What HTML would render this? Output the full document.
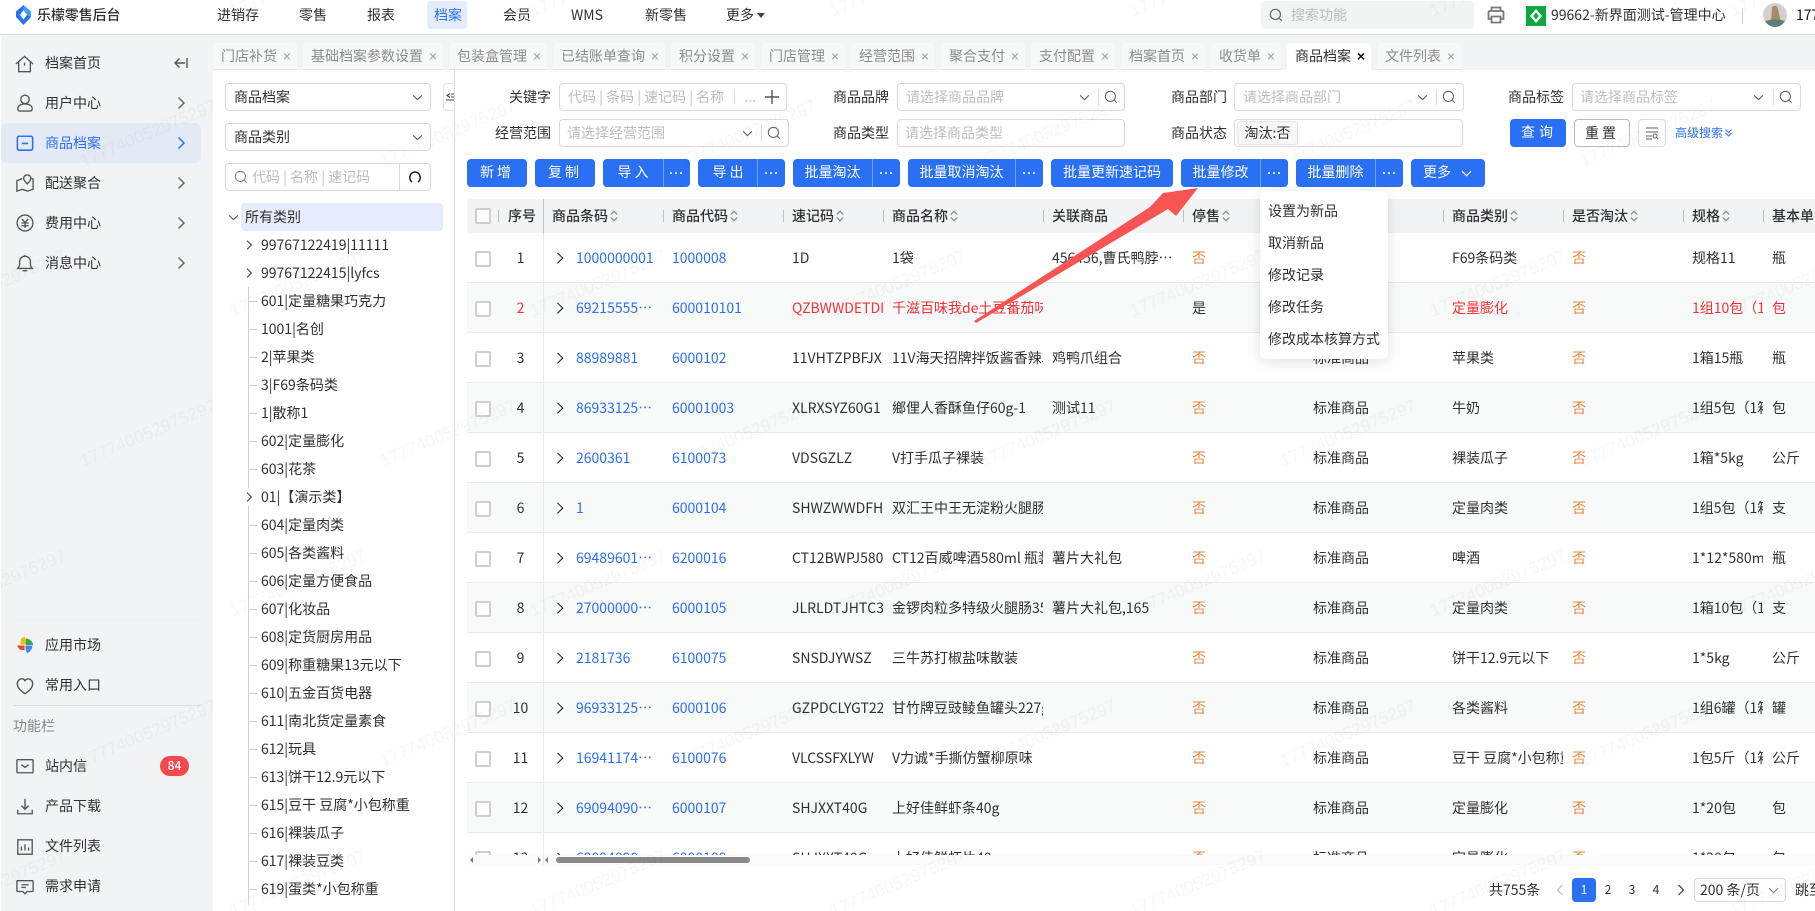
<!DOCTYPE html>
<html lang="zh-CN">
<head>
<meta charset="utf-8">
<title>乐檬零售后台</title>
<style>
*{box-sizing:border-box;margin:0;padding:0}
html,body{width:1815px;height:911px;overflow:hidden;background:#fff}
body{position:relative;font:14px/20px "Noto Sans CJK SC","Liberation Sans",sans-serif;color:#303030}
.a{position:absolute;white-space:nowrap}
svg{position:absolute;overflow:visible;fill:none}
.nav{top:5px;color:#303030}
.side{left:45px;color:#303030}
.sv{left:16px;width:18px;height:18px;stroke:#555;stroke-width:1.5}
.ch{left:176px;width:10px;height:14px;stroke:#666;stroke-width:1.5}
.tab{top:43px;height:27px;background:#f7f8f8;border-radius:4px 4px 0 0;color:#8c8c8c;line-height:26px;padding-left:8px;border-bottom:1px solid #e4e4e4}
.tab i{position:absolute;right:6px;top:0;font:14px/26px "Liberation Sans",sans-serif;color:#9a9a9a}
.tab.on{background:#fff;color:#303030;border-bottom:0}
.tab.on i{color:#111;font-weight:700}
.in{border:1px solid #d9d9d9;border-radius:4px;background:#fff}
.ph{color:#bdbdbd}
.lab{color:#303030;line-height:20px}
.tr{left:261px;color:#303030}
.stub{left:249px;width:8px;height:1px;background:#ccc}
.btn{top:159px;height:28px;background:#2970f4;color:#fff;border-radius:4px;text-align:center;line-height:27px}
.sp{position:absolute;top:0;bottom:0;width:1px;background:rgba(255,255,255,.35)}
.dt{position:absolute;top:13px;width:2px;height:2px;border-radius:50%;background:#fff;box-shadow:5px 0 #fff,-5px 0 #fff}
.r{position:absolute;left:467px;width:1348px;height:50px;border-bottom:1px solid #e9e9e9;overflow:hidden}
.r.z{background:#f8f9f9}
.r:before{content:"";position:absolute;left:76px;top:0;bottom:0;width:1px;background:#e9e9e9}
.r b{position:absolute;left:8px;top:18px;width:16px;height:16px;border:2px solid #cfcfcf;border-radius:2px;background:#fff}
.r u{position:absolute;left:87px;top:21px;width:7.5px;height:7.5px;border:solid #111;border-width:1.8px 1.8px 0 0;transform:rotate(45deg)}
.r span{position:absolute;top:0;line-height:50px;white-space:nowrap;overflow:hidden}
.s0{left:31px;width:45px;text-align:center}
.s1{left:109px;color:#2b6ff5;width:88px}
.s2{left:205px;color:#2b6ff5;width:100px}
.s3{left:325px;width:91px}
.s4{left:425px;width:151px}
.s5{left:585px;width:125px}
.s6{left:725px;color:#e8863c;width:30px}
.s7{left:846px;width:70px}
.s8{left:985px;width:111px}
.s9{left:1105px;color:#e8863c;width:30px}
.s10{left:1225px;width:71px}
.s11{left:1305px;width:40px}
.red span{color:#fa2f35}
.red .s1,.red .s2{color:#2b6ff5}
.red .s6,.red .s9{color:#e8863c}
.red .s6{color:#303030}
.th{top:206px;font-weight:500;color:#303030}
.sep{top:210px;width:1px;height:12px;background:#bdbdbd}
.so{top:210px;width:8px;height:12px;stroke:#808080;stroke-width:1.2}
.mi{left:1268px;color:#303030}
</style>
</head>
<body>
<svg width="0" height="0" style="position:absolute">
<defs>
<symbol id="srt" viewBox="0 0 8 12"><path d="M.8 4.500 4 1.200 7.200 4.500M.8 7.500 4 10.800 7.200 7.500"/></symbol>
<symbol id="sch" viewBox="0 0 16 16"><circle cx="7.300" cy="7.300" r="5.800"/><path d="M11.600 11.600 14.600 14.600"/></symbol>
<symbol id="dwn" viewBox="0 0 12 8"><path d="M1 1.500 6 6.500 11 1.500"/></symbol>
<symbol id="rgt" viewBox="0 0 10 14"><path d="M2.500 1.500 8 7 2.500 12.500"/></symbol>
</defs>
</svg>

<!-- header -->
<div class="a" style="left:0;top:0;width:1815px;height:35px;background:#fff;border-bottom:1px solid #ddd"></div>
<svg style="left:16px;top:5px" width="15" height="20" viewBox="0 0 15 20"><path d="M7.500 0 15 6.500V12L7.500 20 0 12V6.500Z" fill="#2b72f0"/><path d="M7.500 0 15 6.500V12L11 10 7.500 5Z" fill="#46a0f5"/><path d="M7.500 5 11 10 7.500 14.500 4 10Z" fill="#fff"/></svg>
<div class="a" style="left:37px;top:5px;font-weight:500;letter-spacing:-.1px">乐檬零售后台</div>
<div class="a nav" style="left:217px">进销存</div>
<div class="a nav" style="left:299px">零售</div>
<div class="a nav" style="left:367px">报表</div>
<div class="a" style="left:427px;top:1px;width:40px;height:28px;background:#e4ecfc;border-radius:4px"></div>
<div class="a nav" style="left:434px;color:#2b6ff5">档案</div>
<div class="a nav" style="left:503px">会员</div>
<div class="a nav" style="left:571px">WMS</div>
<div class="a nav" style="left:645px">新零售</div>
<div class="a nav" style="left:726px">更多</div>
<svg style="left:757px;top:13px" width="8" height="5"><path d="M0 0H8L4 5Z" fill="#444"/></svg>
<div class="a" style="left:1261px;top:1px;width:213px;height:28px;background:#f2f3f5;border-radius:4px"></div>
<svg style="left:1269px;top:8px;stroke:#666;stroke-width:1.400" width="14" height="14"><use href="#sch" width="14" height="14"/></svg>
<div class="a" style="left:1291px;top:5px;color:#bdbdbd">搜索功能</div>
<svg style="left:1487px;top:6px;stroke:#777;stroke-width:1.800" width="18" height="18" viewBox="0 0 18 18"><path d="M4.500 5V1.500H13.500V5M4.500 13H1.500V6.500Q1.500 5 3 5H15Q16.500 5 16.500 6.500V13H13.500"/><path d="M4.500 10.500H13.500V16.500H4.500Z"/></svg>
<div class="a" style="left:1526px;top:6px;width:20px;height:20px;background:#0fa83f"></div>
<svg style="left:1530px;top:9px" width="12" height="14" viewBox="0 0 12 14"><path d="M6 0 12 7 6 14 0 7Z" fill="#fff"/><path d="M6 3.500 8.800 7 6 10.500 3.200 7Z" fill="#0fa83f"/></svg>
<div class="a" style="left:1551px;top:5px">99662-新界面测试-管理中心</div>
<div class="a" style="left:1742px;top:8px;width:1px;height:16px;background:#ccc"></div>
<svg style="left:1763px;top:3px" width="24" height="24" viewBox="0 0 24 24"><circle cx="12" cy="12" r="12" fill="#d5d0cc"/><path d="M9 4Q14 1 15 6L18 19H8Z" fill="#a98a6c"/><path d="M2 18Q12 15 22 18 18 24 12 24T2 18Z" fill="#5d7f7c"/></svg>
<div class="a" style="left:1796px;top:5px;width:19px;overflow:hidden;color:#111">177</div>

<!-- sidebar -->
<div class="a" style="left:1px;top:35px;width:212px;height:876px;background:#f2f3f5"></div>
<div class="a" style="left:1px;top:123px;width:200px;height:40px;background:#e4e9f6;border-radius:6px"></div>
<div class="a" style="left:13px;top:620px;width:188px;height:1px;background:#efefef"></div>

<svg class="sv" style="left:15px;top:55px;width:19px;height:18px" viewBox="0 0 20 20"><path d="M.5 10 10 1.500 19.500 10M3.500 8V18.500H16.500V8M10 8.500V12"/></svg>
<div class="a side" style="top:53px">档案首页</div>
<svg style="left:174px;top:56px;stroke:#555;stroke-width:1.400" width="14" height="14" viewBox="0 0 14 14"><path d="M13 2V12M11 7H1M5.500 2.500 1 7 5.500 11.500"/></svg>

<svg class="sv" style="top:94px" viewBox="0 0 20 20"><circle cx="10" cy="6" r="4.700"/><path d="M10 11C4 11 2 14 2 16.500 2 18.500 3.500 19 5 19H15C16.500 19 18 18.500 18 16.500 18 14 16 11 10 11Z"/></svg>
<div class="a side" style="top:93px">用户中心</div>
<svg class="ch" style="top:96px"><use href="#rgt" width="10" height="14"/></svg>

<svg class="sv" style="top:134px;stroke:#2b6ff5;stroke-width:1.700" viewBox="0 0 20 20"><path d="M3 2.500Q1.500 3 1.500 5V15.500Q1.500 18 4 18H16Q18.500 18 18.500 15.500V5Q18.500 3 17 2.500H3ZM6.500 10.500H13.500"/></svg>
<div class="a side" style="top:133px;color:#2b6ff5">商品档案</div>
<svg class="ch" style="top:136px;stroke:#2b6ff5"><use href="#rgt" width="10" height="14"/></svg>

<svg class="sv" style="top:174px" viewBox="0 0 20 20"><path d="M7 5 1 7.500V19L7 17 13 19 19 17V5.500L16 4.500M7 17 13 19"/><path d="M12.500 1C9.800 1 8.500 3 8.500 4.700 8.500 7 11 9.500 12.500 11 14 9.500 16.500 7 16.500 4.700 16.500 3 15.200 1 12.500 1Z"/></svg>
<div class="a side" style="top:173px">配送聚合</div>
<svg class="ch" style="top:176px"><use href="#rgt" width="10" height="14"/></svg>

<svg class="sv" style="top:214px" viewBox="0 0 20 20"><circle cx="10" cy="10" r="8.800"/><path d="M6.500 5.500 10 9.500 13.500 5.500M6 10H14M6 13H14M10 9.500V15.500"/></svg>
<div class="a side" style="top:213px">费用中心</div>
<svg class="ch" style="top:216px"><use href="#rgt" width="10" height="14"/></svg>

<svg class="sv" style="top:254px" viewBox="0 0 20 20"><path d="M2 16H18C16.500 14.500 16 13 16 11V8.500C16 5 13.500 2.500 10 2.500S4 5 4 8.500V11C4 13 3.500 14.500 2 16ZM7.500 18.500H12.500M10 1V2.500"/></svg>
<div class="a side" style="top:253px">消息中心</div>
<svg class="ch" style="top:256px"><use href="#rgt" width="10" height="14"/></svg>

<svg style="left:16px;top:636px" width="18" height="18" viewBox="0 0 18 18"><path d="M9 1C6 1 4.500 3 4.500 5.500V8.500H9Z" fill="#fbbc05"/><path d="M9.500 2.500Q14 2 17 7.500V9H9.500Z" fill="#34a853"/><path d="M1 9.500H8.500V14Q3 15 1 9.500Z" fill="#ea4335"/><path d="M9.500 9.500H16.500Q16 15 11.500 17 9.500 15 9.500 12Z" fill="#4285f4"/></svg>
<div class="a side" style="top:635px">应用市场</div>
<svg class="sv" style="top:677px;stroke-width:1.600" viewBox="0 0 20 20"><path d="M10 18.500C5 15 1.500 12 1.500 7.500 1.500 4 4 2 6.500 2 8 2 9.200 2.700 10 4 10.800 2.700 12 2 13.500 2 16 2 18.500 4 18.500 7.500 18.500 12 15 15 10 18.500Z"/></svg>
<div class="a side" style="top:675px">常用入口</div>
<div class="a" style="left:13px;top:705px;width:188px;height:1px;background:#dcdcdc"></div>
<div class="a" style="left:13px;top:716px;color:#8a8a8a">功能栏</div>

<svg class="sv" style="top:757px" viewBox="0 0 20 20"><path d="M2 3H18Q19 3 19 4V16.500Q19 17.500 18 17.500H2Q1 17.500 1 16.500V4Q1 3 2 3ZM6 8.500 10 11.500 14 8.500"/></svg>
<div class="a side" style="top:756px">站内信</div>
<div class="a" style="left:160px;top:756px;width:29px;height:20px;background:#f5484d;border-radius:10px;color:#fff;text-align:center;font-size:12px;font-weight:500;line-height:20px">84</div>

<svg class="sv" style="top:798px" viewBox="0 0 20 20"><path d="M10 1V12M6 8.500 10 12.500 14 8.500M2 13V17.500H18V13"/></svg>
<div class="a side" style="top:796px">产品下载</div>

<svg class="sv" style="top:838px" viewBox="0 0 20 20"><path d="M2 2H18V18H2ZM6 9.500V14M10 7V14M14 10.500V14"/></svg>
<div class="a side" style="top:836px">文件列表</div>

<svg class="sv" style="top:878px" viewBox="0 0 20 20"><path d="M2 3H18Q19 3 19 4V14Q19 15 18 15H12.500L10 17.500 7.500 15H2Q1 15 1 14V4Q1 3 2 3ZM6 7.500H14M6 10.500H11"/></svg>
<div class="a side" style="top:876px">需求申请</div>

<!-- tab bar -->
<div class="a" style="left:213px;top:35px;width:1602px;height:35px;background:#f2f3f5"></div>
<div class="a" style="left:213px;top:70px;width:1602px;height:841px;background:#fff"></div>
<div class="a tab" style="left:213px;width:84px">门店补货<i>×</i></div>
<div class="a tab" style="left:303px;width:140px">基础档案参数设置<i>×</i></div>
<div class="a tab" style="left:449px;width:98px">包装盒管理<i>×</i></div>
<div class="a tab" style="left:553px;width:112px">已结账单查询<i>×</i></div>
<div class="a tab" style="left:671px;width:84px">积分设置<i>×</i></div>
<div class="a tab" style="left:761px;width:84px">门店管理<i>×</i></div>
<div class="a tab" style="left:851px;width:84px">经营范围<i>×</i></div>
<div class="a tab" style="left:941px;width:84px">聚合支付<i>×</i></div>
<div class="a tab" style="left:1031px;width:84px">支付配置<i>×</i></div>
<div class="a tab" style="left:1121px;width:84px">档案首页<i>×</i></div>
<div class="a tab" style="left:1211px;width:70px">收货单<i>×</i></div>
<div class="a tab on" style="left:1287px;width:84px">商品档案<i>×</i></div>
<div class="a tab" style="left:1377px;width:84px">文件列表<i>×</i></div>

<!-- left tree panel -->
<div class="a in" style="left:225px;top:83px;width:206px;height:28px"></div>
<div class="a" style="left:234px;top:87px">商品档案</div>
<svg style="left:412px;top:94px;stroke:#666;stroke-width:1.300" width="11" height="7"><use href="#dwn" width="11" height="7"/></svg>
<div class="a in" style="left:225px;top:123px;width:206px;height:28px"></div>
<div class="a" style="left:234px;top:127px">商品类别</div>
<svg style="left:412px;top:134px;stroke:#666;stroke-width:1.300" width="11" height="7"><use href="#dwn" width="11" height="7"/></svg>
<div class="a in" style="left:225px;top:163px;width:206px;height:28px"></div>
<div class="a" style="left:399px;top:164px;width:1px;height:26px;background:#d9d9d9"></div>
<svg style="left:234px;top:170px;stroke:#888;stroke-width:1.200" width="14" height="14"><use href="#sch" width="14" height="14"/></svg>
<div class="a ph" style="left:252px;top:167px">代码 | 名称 | 速记码</div>
<svg style="left:409px;top:171px;stroke:#222;stroke-width:1.500" width="12" height="12" viewBox="0 0 12 12"><path d="M3 11C1.500 10 .800 8.500.800 6.500.800 3.500 3 1 6 1S11.200 3.500 11.200 6.500C11.200 8.500 10.500 10 9 11"/></svg>

<div class="a" style="left:443px;top:83px;width:12px;height:28px;border:1px solid #e3e3e3;border-right:0;border-radius:4px 0 0 4px;background:#fff"></div>
<svg style="left:446px;top:92px;stroke:#444;stroke-width:1.100" width="9" height="9" viewBox="0 0 9 9"><path d="M4 1.500 1 3.500 4 5.500M5 2H9M5 5H9M0 8H9"/></svg>
<div class="a" style="left:454px;top:70px;width:1px;height:841px;background:#ddd"></div>

<svg style="left:228px;top:214px;stroke:#666;stroke-width:1.300" width="11" height="7"><use href="#dwn" width="11" height="7"/></svg>
<div class="a" style="left:241px;top:203px;width:202px;height:28px;background:#e5ebfa;border-radius:4px"></div>
<div class="a" style="left:245px;top:207px">所有类别</div>
<div class="a" style="left:248px;top:287px;width:1px;height:618px;background:#d0d0d0"></div>
<div class="a" style="left:243px;top:488px;width:12px;height:18px;background:#fff"></div>
<svg style="left:245px;top:239px;stroke:#444;stroke-width:1.400" width="8" height="12" viewBox="0 0 10 14"><use href="#rgt" width="10" height="14"/></svg>
<svg style="left:245px;top:267px;stroke:#444;stroke-width:1.400" width="8" height="12" viewBox="0 0 10 14"><use href="#rgt" width="10" height="14"/></svg>
<svg style="left:245px;top:491px;stroke:#444;stroke-width:1.400" width="8" height="12" viewBox="0 0 10 14"><use href="#rgt" width="10" height="14"/></svg>
<div class="a tr" style="top:235px">99767122419|11111</div>
<div class="a tr" style="top:263px">99767122415|lyfcs</div>
<div class="a tr" style="top:291px">601|定量糖果巧克力</div>
<div class="a tr" style="top:319px">1001|名创</div>
<div class="a tr" style="top:347px">2|苹果类</div>
<div class="a tr" style="top:375px">3|F69条码类</div>
<div class="a tr" style="top:403px">1|散称1</div>
<div class="a tr" style="top:431px">602|定量膨化</div>
<div class="a tr" style="top:459px">603|花茶</div>
<div class="a tr" style="top:487px">01|【演示类】</div>
<div class="a tr" style="top:515px">604|定量肉类</div>
<div class="a tr" style="top:543px">605|各类酱料</div>
<div class="a tr" style="top:571px">606|定量方便食品</div>
<div class="a tr" style="top:599px">607|化妆品</div>
<div class="a tr" style="top:627px">608|定货厨房用品</div>
<div class="a tr" style="top:655px">609|称重糖果13元以下</div>
<div class="a tr" style="top:683px">610|五金百货电器</div>
<div class="a tr" style="top:711px">611|南北货定量素食</div>
<div class="a tr" style="top:739px">612|玩具</div>
<div class="a tr" style="top:767px">613|饼干12.9元以下</div>
<div class="a tr" style="top:795px">615|豆干 豆腐*小包称重</div>
<div class="a tr" style="top:823px">616|裸装瓜子</div>
<div class="a tr" style="top:851px">617|裸装豆类</div>
<div class="a tr" style="top:879px">619|蛋类*小包称重</div>
<div class="a stub" style="top:301px"></div><div class="a stub" style="top:329px"></div><div class="a stub" style="top:357px"></div><div class="a stub" style="top:385px"></div><div class="a stub" style="top:413px"></div><div class="a stub" style="top:441px"></div><div class="a stub" style="top:469px"></div><div class="a stub" style="top:525px"></div><div class="a stub" style="top:553px"></div><div class="a stub" style="top:581px"></div><div class="a stub" style="top:609px"></div><div class="a stub" style="top:637px"></div><div class="a stub" style="top:665px"></div><div class="a stub" style="top:693px"></div><div class="a stub" style="top:721px"></div><div class="a stub" style="top:749px"></div><div class="a stub" style="top:777px"></div><div class="a stub" style="top:805px"></div><div class="a stub" style="top:833px"></div><div class="a stub" style="top:861px"></div><div class="a stub" style="top:889px"></div>

<!-- search form -->
<div class="a lab" style="left:509px;top:87px">关键字</div>
<div class="a in" style="left:559px;top:83px;width:228px;height:28px"></div>
<div class="a ph" style="left:568px;top:87px;width:190px;overflow:hidden">代码 | 条码 | 速记码 | 名称 ｜ ...</div>
<svg style="left:765px;top:90px;stroke:#555;stroke-width:1.400" width="14" height="14"><path d="M7 0V14M0 7H14"/></svg>

<div class="a lab" style="left:495px;top:123px">经营范围</div>
<div class="a in" style="left:559px;top:119px;width:230px;height:28px"></div>
<div class="a ph" style="left:567px;top:123px">请选择经营范围</div>
<svg style="left:742px;top:130px;stroke:#666;stroke-width:1.300" width="11" height="7"><use href="#dwn" width="11" height="7"/></svg>
<div class="a" style="left:761px;top:125px;width:1px;height:16px;background:#d9d9d9"></div>
<svg style="left:767px;top:126px;stroke:#666;stroke-width:1.200" width="14" height="14"><use href="#sch" width="14" height="14"/></svg>

<div class="a lab" style="left:833px;top:87px">商品品牌</div>
<div class="a in" style="left:897px;top:83px;width:228px;height:28px"></div>
<div class="a ph" style="left:906px;top:87px">请选择商品品牌</div>
<svg style="left:1079px;top:94px;stroke:#666;stroke-width:1.300" width="11" height="7"><use href="#dwn" width="11" height="7"/></svg>
<div class="a" style="left:1098px;top:89px;width:1px;height:16px;background:#d9d9d9"></div>
<svg style="left:1104px;top:90px;stroke:#666;stroke-width:1.200" width="14" height="14"><use href="#sch" width="14" height="14"/></svg>

<div class="a lab" style="left:833px;top:123px">商品类型</div>
<div class="a in" style="left:897px;top:119px;width:228px;height:28px"></div>
<div class="a ph" style="left:905px;top:123px">请选择商品类型</div>

<div class="a lab" style="left:1171px;top:87px">商品部门</div>
<div class="a in" style="left:1234px;top:83px;width:230px;height:28px"></div>
<div class="a ph" style="left:1243px;top:87px">请选择商品部门</div>
<svg style="left:1417px;top:94px;stroke:#666;stroke-width:1.300" width="11" height="7"><use href="#dwn" width="11" height="7"/></svg>
<div class="a" style="left:1436px;top:89px;width:1px;height:16px;background:#d9d9d9"></div>
<svg style="left:1442px;top:90px;stroke:#666;stroke-width:1.200" width="14" height="14"><use href="#sch" width="14" height="14"/></svg>

<div class="a lab" style="left:1171px;top:123px">商品状态</div>
<div class="a in" style="left:1234px;top:119px;width:229px;height:28px"></div>
<div class="a" style="left:1237px;top:121px;width:61px;height:24px;background:#f6f6f6;border:1px solid #e3e3e3;border-radius:3px;text-align:center;line-height:22px">淘汰:否</div>

<div class="a lab" style="left:1508px;top:87px">商品标签</div>
<div class="a in" style="left:1572px;top:83px;width:229px;height:28px"></div>
<div class="a ph" style="left:1580px;top:87px">请选择商品标签</div>
<svg style="left:1753px;top:94px;stroke:#666;stroke-width:1.300" width="11" height="7"><use href="#dwn" width="11" height="7"/></svg>
<div class="a" style="left:1773px;top:89px;width:1px;height:16px;background:#d9d9d9"></div>
<svg style="left:1779px;top:90px;stroke:#666;stroke-width:1.200" width="14" height="14"><use href="#sch" width="14" height="14"/></svg>

<div class="a" style="left:1510px;top:119px;width:56px;height:28px;background:#2970f4;border-radius:4px;color:#fff;text-align:center;line-height:27px;letter-spacing:4px;text-indent:2px">查询</div>
<div class="a in" style="left:1574px;top:119px;width:56px;height:28px;text-align:center;line-height:26px;letter-spacing:3px;border-color:#bbb">重置</div>
<div class="a in" style="left:1638px;top:119px;width:28px;height:28px"></div>
<svg style="left:1646px;top:127px;stroke:#666;stroke-width:1" width="12" height="12" viewBox="0 0 12 12"><path d="M0 1H12M0 5H12M0 9H6M0 12H6"/><circle cx="9" cy="9" r="2"/><path d="M10.500 10.500 12 12"/></svg>
<div class="a" style="left:1675px;top:124px;color:#2b6ff5;font-size:12px;line-height:18px">高级搜索</div>
<svg style="left:1725px;top:129px;stroke:#2b6ff5;stroke-width:1" width="7" height="8"><path d="M.5 .5 3.500 3.500 6.500 .5M.5 4 3.500 7 6.500 4"/></svg>

<!-- toolbar -->
<div class="a btn" style="left:467px;width:60px;letter-spacing:3px">新增</div>
<div class="a btn" style="left:535px;width:60px;letter-spacing:3px">复制</div>
<div class="a btn" style="left:603px;width:87px;padding-right:24px;letter-spacing:3px">导入<span class="sp" style="left:60px"></span><span class="dt" style="left:72px"></span></div>
<div class="a btn" style="left:698px;width:87px;padding-right:24px;letter-spacing:3px">导出<span class="sp" style="left:59px"></span><span class="dt" style="left:72px"></span></div>
<div class="a btn" style="left:793px;width:107px;padding-right:28px">批量淘汰<span class="sp" style="left:79px"></span><span class="dt" style="left:92px"></span></div>
<div class="a btn" style="left:908px;width:135px;padding-right:28px">批量取消淘汰<span class="sp" style="left:107px"></span><span class="dt" style="left:120px"></span></div>
<div class="a btn" style="left:1051px;width:122px">批量更新速记码</div>
<div class="a btn" style="left:1181px;width:107px;padding-right:28px">批量修改<span class="sp" style="left:79px"></span><span class="dt" style="left:92px"></span></div>
<div class="a btn" style="left:1296px;width:107px;padding-right:28px">批量删除<span class="sp" style="left:79px"></span><span class="dt" style="left:92px"></span></div>
<div class="a btn" style="left:1411px;width:74px;text-align:left;padding-left:12px">更多</div>
<svg style="left:1461px;top:170px;stroke:#fff;stroke-width:1.300" width="11" height="7"><use href="#dwn" width="11" height="7"/></svg>

<!-- table -->
<div class="a" style="left:467px;top:199px;width:1348px;height:34px;background:#f2f3f5"></div>
<div class="a" style="left:475px;top:208px;width:16px;height:16px;border:2px solid #cfcfcf;border-radius:2px;background:#fff"></div>
<div class="a sep" style="left:498px"></div>
<div class="a th" style="left:508px">序号</div>
<div class="a" style="left:543px;top:199px;width:1px;height:34px;background:#c4c4c4"></div>
<div class="a th" style="left:552px">商品条码</div><svg class="so" style="left:610px"><use href="#srt" width="8" height="12"/></svg>
<div class="a sep" style="left:663px"></div>
<div class="a th" style="left:672px">商品代码</div><svg class="so" style="left:730px"><use href="#srt" width="8" height="12"/></svg>
<div class="a sep" style="left:783px"></div>
<div class="a th" style="left:792px">速记码</div><svg class="so" style="left:836px"><use href="#srt" width="8" height="12"/></svg>
<div class="a sep" style="left:883px"></div>
<div class="a th" style="left:892px">商品名称</div><svg class="so" style="left:950px"><use href="#srt" width="8" height="12"/></svg>
<div class="a sep" style="left:1043px"></div>
<div class="a th" style="left:1052px">关联商品</div>
<div class="a sep" style="left:1183px"></div>
<div class="a th" style="left:1192px">停售</div><svg class="so" style="left:1222px"><use href="#srt" width="8" height="12"/></svg>
<div class="a sep" style="left:1443px"></div>
<div class="a th" style="left:1452px">商品类别</div><svg class="so" style="left:1510px"><use href="#srt" width="8" height="12"/></svg>
<div class="a sep" style="left:1563px"></div>
<div class="a th" style="left:1572px">是否淘汰</div><svg class="so" style="left:1630px"><use href="#srt" width="8" height="12"/></svg>
<div class="a sep" style="left:1683px"></div>
<div class="a th" style="left:1692px">规格</div><svg class="so" style="left:1722px"><use href="#srt" width="8" height="12"/></svg>
<div class="a sep" style="left:1763px"></div>
<div class="a th" style="left:1772px">基本单</div>

<div class="r" style="top:233px"><b></b><span class="s0">1</span><u></u><span class="s1">1000000001</span><span class="s2">1000008</span><span class="s3">1D</span><span class="s4">1袋</span><span class="s5">456456,曹氏鸭脖…</span><span class="s6">否</span><span class="s7">标准商品</span><span class="s8">F69条码类</span><span class="s9">否</span><span class="s10">规格11</span><span class="s11">瓶</span></div>
<div class="r z red" style="top:283px"><b></b><span class="s0">2</span><u></u><span class="s1">69215555…</span><span class="s2">600010101</span><span class="s3">QZBWWDETDI</span><span class="s4">千滋百味我de土豆番茄味</span><span class="s5"></span><span class="s6">是</span><span class="s7">标准商品</span><span class="s8">定量膨化</span><span class="s9">否</span><span class="s10">1组10包（1箱</span><span class="s11">包</span></div>
<div class="r" style="top:333px"><b></b><span class="s0">3</span><u></u><span class="s1">88989881</span><span class="s2">6000102</span><span class="s3">11VHTZPBFJXI</span><span class="s4">11V海天招牌拌饭酱香辣360g</span><span class="s5">鸡鸭爪组合</span><span class="s6">否</span><span class="s7">标准商品</span><span class="s8">苹果类</span><span class="s9">否</span><span class="s10">1箱15瓶</span><span class="s11">瓶</span></div>
<div class="r z" style="top:383px"><b></b><span class="s0">4</span><u></u><span class="s1">86933125…</span><span class="s2">60001003</span><span class="s3">XLRXSYZ60G1</span><span class="s4">鄉俚人香酥鱼仔60g-1</span><span class="s5">测试11</span><span class="s6">否</span><span class="s7">标准商品</span><span class="s8">牛奶</span><span class="s9">否</span><span class="s10">1组5包（1箱</span><span class="s11">包</span></div>
<div class="r" style="top:433px"><b></b><span class="s0">5</span><u></u><span class="s1">2600361</span><span class="s2">6100073</span><span class="s3">VDSGZLZ</span><span class="s4">V打手瓜子裸装</span><span class="s6">否</span><span class="s7">标准商品</span><span class="s8">裸装瓜子</span><span class="s9">否</span><span class="s10">1箱*5kg</span><span class="s11">公斤</span></div>
<div class="r z" style="top:483px"><b></b><span class="s0">6</span><u></u><span class="s1">1</span><span class="s2">6000104</span><span class="s3">SHWZWWDFH</span><span class="s4">双汇王中王无淀粉火腿肠</span><span class="s6">否</span><span class="s7">标准商品</span><span class="s8">定量肉类</span><span class="s9">否</span><span class="s10">1组5包（1箱</span><span class="s11">支</span></div>
<div class="r" style="top:533px"><b></b><span class="s0">7</span><u></u><span class="s1">69489601…</span><span class="s2">6200016</span><span class="s3">CT12BWPJ580</span><span class="s4">CT12百威啤酒580ml 瓶装</span><span class="s5">薯片大礼包</span><span class="s6">否</span><span class="s7">标准商品</span><span class="s8">啤酒</span><span class="s9">否</span><span class="s10">1*12*580ml</span><span class="s11">瓶</span></div>
<div class="r z" style="top:583px"><b></b><span class="s0">8</span><u></u><span class="s1">27000000…</span><span class="s2">6000105</span><span class="s3">JLRLDTJHTC35</span><span class="s4">金锣肉粒多特级火腿肠35g</span><span class="s5">薯片大礼包,165</span><span class="s6">否</span><span class="s7">标准商品</span><span class="s8">定量肉类</span><span class="s9">否</span><span class="s10">1箱10包（1</span><span class="s11">支</span></div>
<div class="r" style="top:633px"><b></b><span class="s0">9</span><u></u><span class="s1">2181736</span><span class="s2">6100075</span><span class="s3">SNSDJYWSZ</span><span class="s4">三牛苏打椒盐味散装</span><span class="s6">否</span><span class="s7">标准商品</span><span class="s8">饼干12.9元以下</span><span class="s9">否</span><span class="s10">1*5kg</span><span class="s11">公斤</span></div>
<div class="r z" style="top:683px"><b></b><span class="s0">10</span><u></u><span class="s1">96933125…</span><span class="s2">6000106</span><span class="s3">GZPDCLYGT22</span><span class="s4">甘竹牌豆豉鲮鱼罐头227g</span><span class="s6">否</span><span class="s7">标准商品</span><span class="s8">各类酱料</span><span class="s9">否</span><span class="s10">1组6罐（1箱</span><span class="s11">罐</span></div>
<div class="r" style="top:733px"><b></b><span class="s0">11</span><u></u><span class="s1">16941174…</span><span class="s2">6100076</span><span class="s3">VLCSSFXLYW</span><span class="s4">V力诚*手撕仿蟹柳原味</span><span class="s6">否</span><span class="s7">标准商品</span><span class="s8">豆干 豆腐*小包称重</span><span class="s9">否</span><span class="s10">1包5斤（1箱</span><span class="s11">公斤</span></div>
<div class="r z" style="top:783px"><b></b><span class="s0">12</span><u></u><span class="s1">69094090…</span><span class="s2">6000107</span><span class="s3">SHJXXT40G</span><span class="s4">上好佳鲜虾条40g</span><span class="s6">否</span><span class="s7">标准商品</span><span class="s8">定量膨化</span><span class="s9">否</span><span class="s10">1*20包</span><span class="s11">包</span></div>
<div class="r" style="top:833px;height:22px;border-bottom:0"><b></b><span class="s0">13</span><u></u><span class="s1">69094090…</span><span class="s2">6000108</span><span class="s3">SHJXXT40G</span><span class="s4">上好佳鲜虾片40g</span><span class="s6">否</span><span class="s7">标准商品</span><span class="s8">定量膨化</span><span class="s9">否</span><span class="s10">1*20包</span><span class="s11">包</span></div>

<!-- scrollbar -->
<div class="a" style="left:467px;top:855px;width:1348px;height:10px;background:#fafafa"></div>
<div class="a" style="left:543px;top:855px;width:1px;height:10px;background:#e9e9e9"></div>
<div class="a" style="left:556px;top:857px;width:194px;height:6px;background:#8a8a8a;border-radius:3px"></div>
<svg style="left:470px;top:857px" width="80" height="6"><path d="M3 0 0 3 3 6ZM68 0 71 3 68 6ZM78 0 75 3 78 6Z" fill="#777"/></svg>

<!-- pagination -->
<div class="a" style="left:1489px;top:880px">共755条</div>
<svg style="left:1556px;top:884px;stroke:#bbb;stroke-width:1.200" width="8" height="12" viewBox="0 0 8 12"><path d="M6.500 1 1.500 6 6.500 11"/></svg>
<div class="a" style="left:1572px;top:878px;width:24px;height:24px;background:#2970f4;border-radius:4px;color:#fff;text-align:center;font-size:12px;line-height:24px">1</div>
<div class="a" style="left:1596px;top:878px;width:24px;text-align:center;font-size:12px;line-height:24px">2</div>
<div class="a" style="left:1620px;top:878px;width:24px;text-align:center;font-size:12px;line-height:24px">3</div>
<div class="a" style="left:1644px;top:878px;width:24px;text-align:center;font-size:12px;line-height:24px">4</div>
<svg style="left:1677px;top:884px;stroke:#333;stroke-width:1.200" width="8" height="12" viewBox="0 0 8 12"><path d="M1.500 1 6.500 6 1.500 11"/></svg>
<div class="a in" style="left:1694px;top:878px;width:92px;height:24px;border-radius:4px"></div>
<div class="a" style="left:1700px;top:880px">200 条/页</div>
<svg style="left:1768px;top:887px;stroke:#888;stroke-width:1.300" width="11" height="7"><use href="#dwn" width="11" height="7"/></svg>
<div class="a" style="left:1795px;top:880px;width:20px;overflow:hidden">跳至</div>

<!-- dropdown -->
<div class="a" style="left:1260px;top:191px;width:128px;height:168px;background:#fff;border-radius:6px;box-shadow:0 3px 14px rgba(0,0,0,.13)"></div>
<div class="a mi" style="top:201px">设置为新品</div>
<div class="a mi" style="top:233px">取消新品</div>
<div class="a mi" style="top:265px">修改记录</div>
<div class="a mi" style="top:297px">修改任务</div>
<div class="a mi" style="top:329px">修改成本核算方式</div>

<!-- red arrow -->
<svg style="left:0;top:0" width="1815" height="911"><path d="M974 321 1150 207 1163 193 1198 188 1176 216 1168 209 976 323Z" fill="#f95454"/></svg>

<!-- watermark -->
<svg style="left:0;top:0;pointer-events:none" width="1815" height="911">
<defs><pattern id="wm" patternUnits="userSpaceOnUse" width="300" height="300">
<g font-family="Liberation Sans, sans-serif" font-size="17.5" fill="#000" fill-opacity=".03">
<text x="83" y="167" transform="rotate(-23 83 167)">177740052975297</text>
<text x="233" y="17" transform="rotate(-23 233 17)">177740052975297</text>
<text x="233" y="317" transform="rotate(-23 233 317)">177740052975297</text>
<text x="-67" y="17" transform="rotate(-23 -67 17)">177740052975297</text>
<text x="-67" y="317" transform="rotate(-23 -67 317)">177740052975297</text>
</g></pattern></defs>
<rect width="1815" height="911" fill="url(#wm)"/>
</svg>
</body>
</html>
